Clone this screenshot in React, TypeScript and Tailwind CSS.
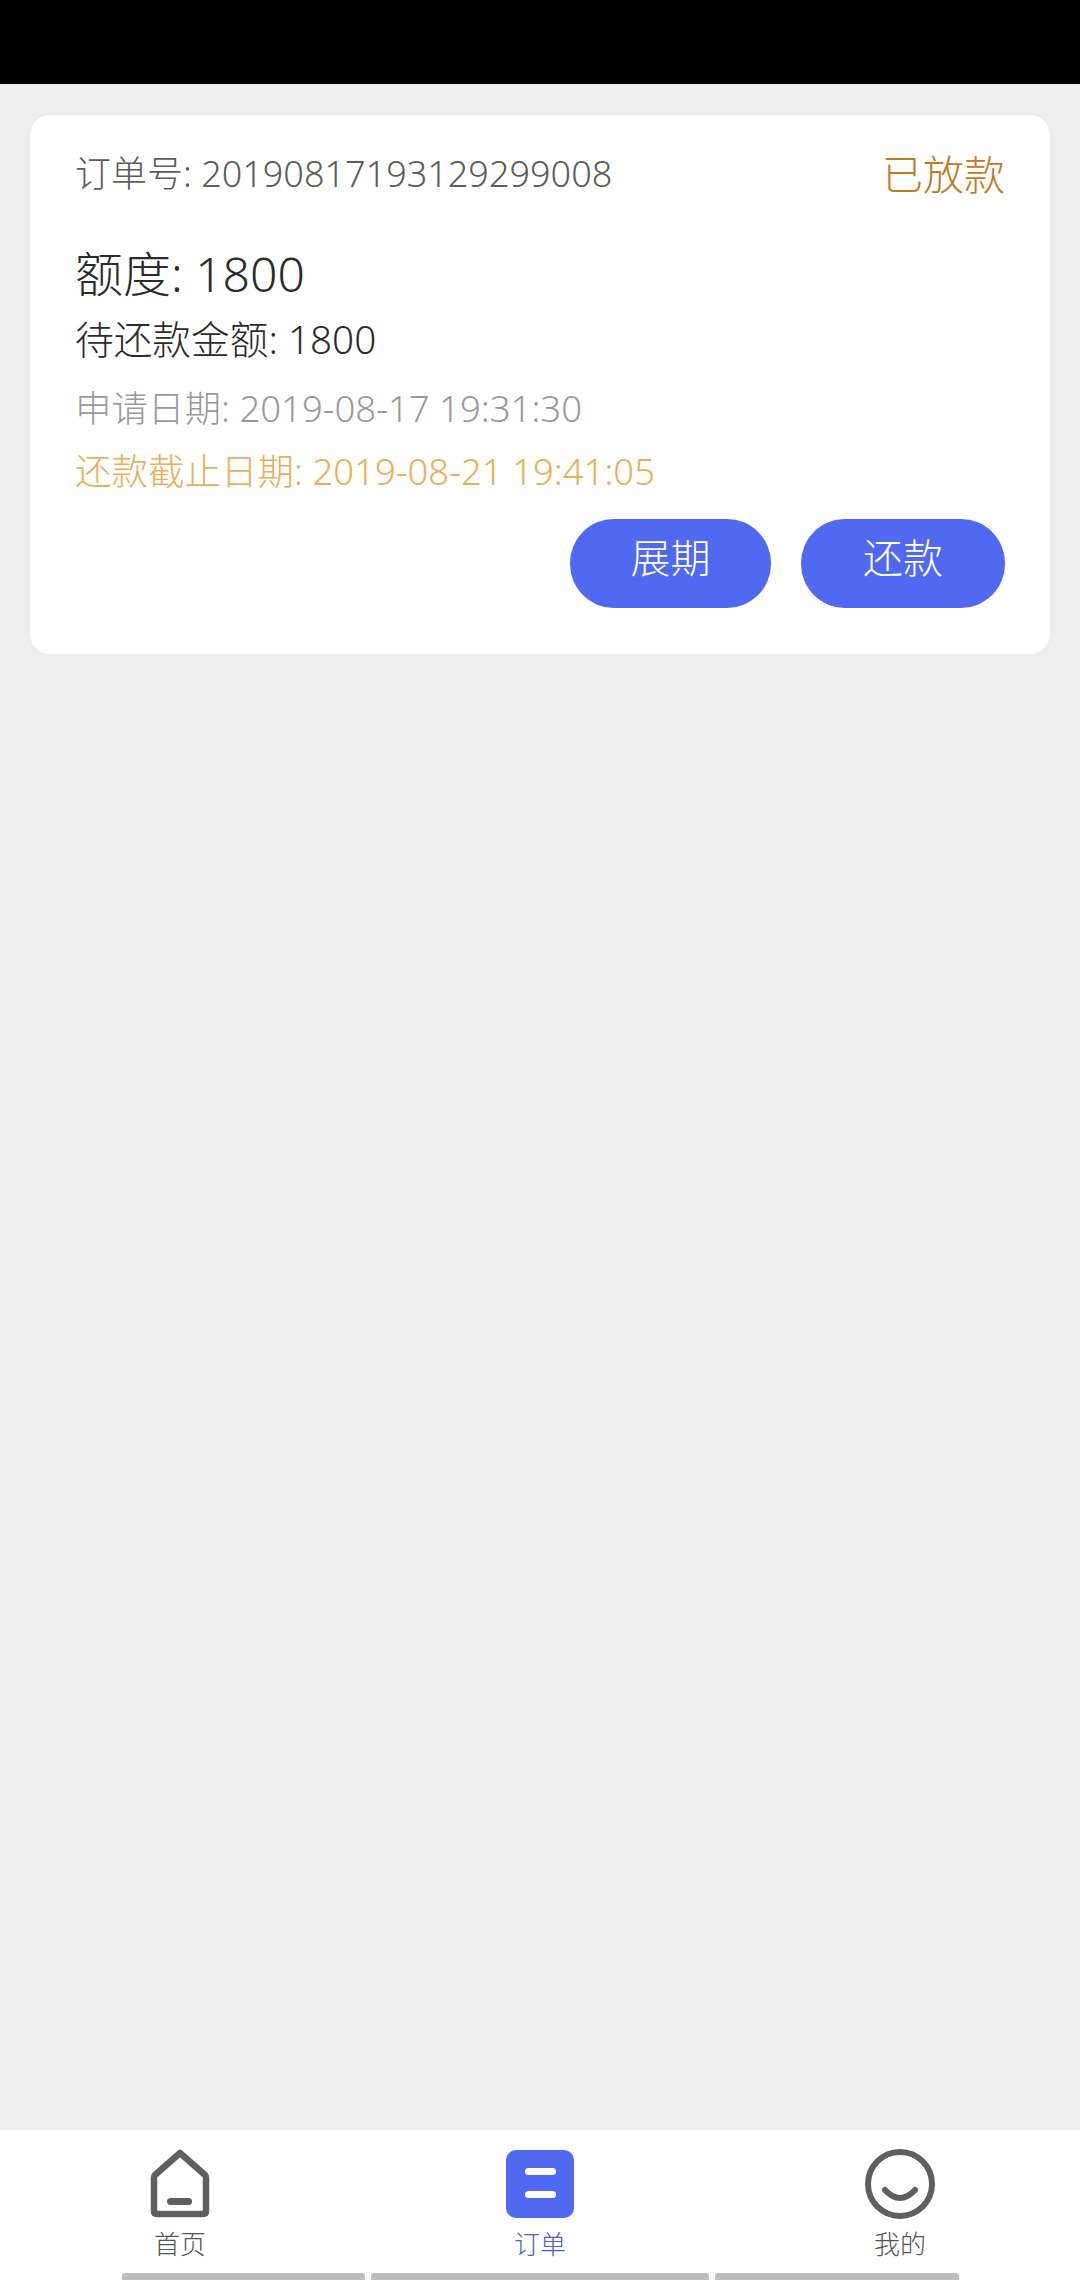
import React from 'react';

const FONT = "font-['Noto_Sans','Noto_Sans_CJK_SC',sans-serif]";

function HomeIcon() {
  return (
    <svg width="60" height="70" viewBox="0 0 60 70" fill="none">
      <path d="M30 4 L55 26 Q56 27 56 29 V62 Q56 65 53 65 H7 Q4 65 4 62 V29 Q4 27 5 26 Z" stroke="#5f5f62" strokeWidth="6.5" strokeLinejoin="round" />
      <rect x="17" y="49" width="25" height="7" rx="3.5" fill="#5f5f62" />
    </svg>
  );
}

function OrderIcon() {
  return (
    <svg width="68" height="68" viewBox="0 0 68 68" fill="none">
      <rect width="68" height="68" rx="10" fill="#5069f0" />
      <rect x="19" y="18" width="31" height="7" rx="3.5" fill="#fff" />
      <rect x="19" y="41" width="31" height="7" rx="3.5" fill="#fff" />
    </svg>
  );
}

function MineIcon() {
  return (
    <svg width="70" height="70" viewBox="0 0 70 70" fill="none">
      <circle cx="35" cy="35" r="32" stroke="#5f5f62" strokeWidth="6" />
      <path d="M20 41 Q35 57 50 41" stroke="#5f5f62" strokeWidth="6" strokeLinecap="round" />
    </svg>
  );
}

const tabs = [
  { label: '首页', icon: <HomeIcon />, color: 'text-[#555555]' },
  { label: '订单', icon: <OrderIcon />, color: 'text-[#4a62b8]' },
  { label: '我的', icon: <MineIcon />, color: 'text-[#555555]' },
];

export default function App() {
  return (
    <div className={`flex h-[2280px] w-[1080px] flex-col overflow-hidden bg-[#eeeeee] ${FONT}`}>
      {/* status bar */}
      <div className="h-[84px] shrink-0 bg-black" />

      {/* order list */}
      <main className="flex-1 px-[30px] pt-[31px]">
        <div className="h-[539px] rounded-[20px] bg-white pl-[45px] pr-[45px] pt-[31px] shadow-[0_0_6px_rgba(0,0,0,0.03)]">
          <div className="flex h-[56px] items-center justify-between">
            <span className="text-[36px] font-light leading-none text-[#5c5c5c]">订单号: 20190817193129299008</span>
            <span className="text-[41px] font-light leading-none text-[#c27a1c]">已放款</span>
          </div>
          <p className="mt-[41px] text-[48px] font-light leading-[62px] text-[#2b2b2b]">额度: 1800</p>
          <p className="mt-[6px] text-[38.7px] font-light leading-[56px] text-[#2b2b2b]">待还款金额: 1800</p>
          <p className="mt-[13px] text-[36.5px] font-light leading-[56px] text-[#9a9a9a]">申请日期: 2019-08-17 19:31:30</p>
          <p className="mt-[7px] text-[36.5px] font-light leading-[56px] text-[#ebae58]">还款截止日期: 2019-08-21 19:41:05</p>
          <div className="mt-[20px] flex justify-end gap-[30px]">
            <button className="h-[89px] w-[201px] rounded-[44px] bg-[#5069f0] pb-[12px] text-[40px] font-light leading-none text-white">展期</button>
            <button className="h-[89px] w-[204px] rounded-[44px] bg-[#5069f0] pb-[12px] text-[40px] font-light leading-none text-white">还款</button>
          </div>
        </div>
      </main>

      {/* tab bar */}
      <nav className="flex h-[150px] shrink-0 flex-col bg-white">
        <div className="grid flex-1 grid-cols-3 pt-[19px]">
          {tabs.map((t) => (
            <div key={t.label} className="flex flex-col items-center">
              <div className="flex h-[70px] items-center">{t.icon}</div>
              <span className={`mt-[7px] text-[26px] font-light leading-[36px] ${t.color}`}>{t.label}</span>
            </div>
          ))}
        </div>
        {/* gray strips along the bottom edge */}
        <div className="flex h-[7px] gap-[6px] pl-[122px]">
          <div className="w-[243px] rounded-t-[3px] bg-[#bdbdbd]" />
          <div className="w-[338px] rounded-t-[3px] bg-[#bdbdbd]" />
          <div className="w-[244px] rounded-t-[3px] bg-[#bdbdbd]" />
        </div>
      </nav>
    </div>
  );
}
